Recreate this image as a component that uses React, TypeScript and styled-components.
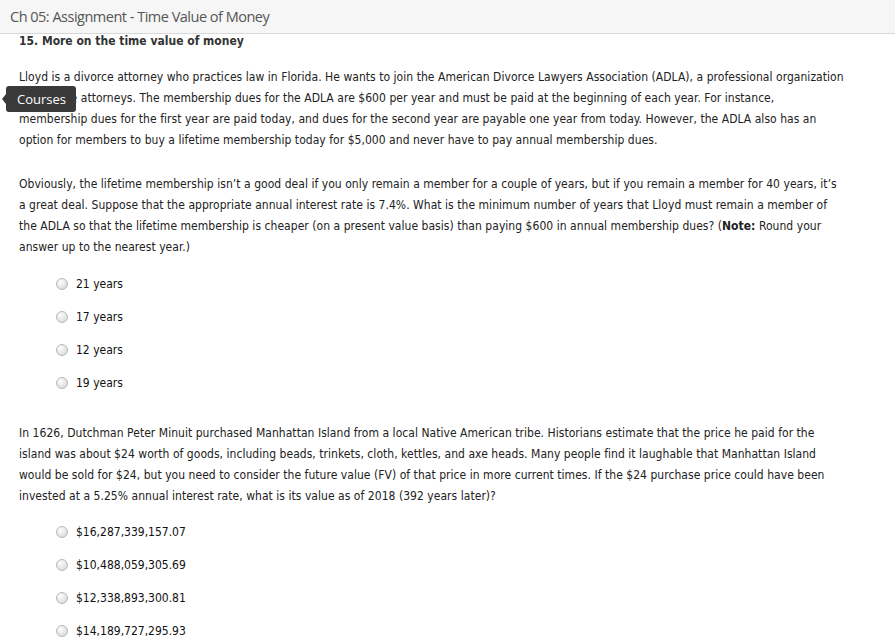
import React from 'react';
import styled, { createGlobalStyle } from 'styled-components';

const GlobalStyle = createGlobalStyle`
    body {
        margin: 0;
        background: #fff;
    }
`;

const Page = styled.div`
    position: relative;
    width: 895px;
    min-height: 639px;
    overflow: hidden;
`;

const Header = styled.header`
    height: 34px;
    display: flex;
    align-items: center;
    padding-left: 10px;
    background-color: #F6F6F6;
    border-bottom: 1px solid #D8D8D8;
    box-sizing: border-box;
`;

const Title = styled.h1`
    margin: 0;
    font-family: "Open Sans", sans-serif;
    font-weight: 400;
    font-size: 14.5px;
    color: #555;
    letter-spacing: -0.5px;
`;

const Content = styled.main`
    padding: 0 19px;
    font-family: "DejaVu Sans Condensed", "DejaVu Sans", sans-serif;
    font-size: 12px;
    color: #222;
`;

const Heading = styled.h2`
    margin: 0;
    font-size: 12px;
    line-height: 14px;
    font-weight: bold;
    color: #333;
`;

const Paragraph = styled.p<{ $gap?: number }>`
    margin: ${p => p.$gap ?? 23}px 0 0 0;
    line-height: 21px;
    letter-spacing: 0.04px;
    white-space: nowrap;
`;

const Options = styled.ul<{ $gap?: number }>`
    list-style: none;
    margin: ${p => p.$gap ?? 9}px 0 0 0;
    padding: 0 0 0 37px;
`;

const Option = styled.li`
    display: flex;
    align-items: center;
    height: 33px;
`;

const Radio = styled.input.attrs({ type: 'radio' })`
    appearance: none;
    width: 12px;
    height: 12px;
    margin: 0 8px 0 0;
    border-radius: 50%;
    border: 1px solid #B8B8B8;
    background: radial-gradient(circle at 35% 30%, #FDFDFD 0%, #E6E6E6 55%, #D2D2D2 100%);
    box-sizing: border-box;
`;

const OptionLabel = styled.label`
    color: #111;
`;

const Tooltip = styled.div`
    position: absolute;
    left: 6px;
    top: 86px;
    height: 26px;
    padding: 0 10px 0 11px;
    display: flex;
    align-items: center;
    background: #3A3A3A;
    border-radius: 3px;
    font-family: "Open Sans", sans-serif;
    font-size: 13px;
    color: #fff;

    &::before {
        content: '';
        position: absolute;
        left: -4px;
        top: 8px;
        border-style: solid;
        border-width: 5px 4px 5px 0;
        border-color: transparent #3A3A3A transparent transparent;
    }
`;

const Lines = ({ lines }: { lines: React.ReactNode[] }) => (
    <>
        {lines.map((line, i) => (
            <React.Fragment key={i}>
                {line}
                {i < lines.length - 1 && <br />}
            </React.Fragment>
        ))}
    </>
);

const intro = [
    'Lloyd is a divorce attorney who practices law in Florida. He wants to join the American Divorce Lawyers Association (ADLA), a professional organization',
    'for divorce attorneys. The membership dues for the ADLA are $600 per year and must be paid at the beginning of each year. For instance,',
    'membership dues for the first year are paid today, and dues for the second year are payable one year from today. However, the ADLA also has an',
    'option for members to buy a lifetime membership today for $5,000 and never have to pay annual membership dues.',
];

const lifetime = [
    'Obviously, the lifetime membership isn’t a good deal if you only remain a member for a couple of years, but if you remain a member for 40 years, it’s',
    'a great deal. Suppose that the appropriate annual interest rate is 7.4%. What is the minimum number of years that Lloyd must remain a member of',
    <>the ADLA so that the lifetime membership is cheaper (on a present value basis) than paying $600 in annual membership dues? (<b>Note:</b> Round your</>,
    'answer up to the nearest year.)',
];

const manhattan = [
    'In 1626, Dutchman Peter Minuit purchased Manhattan Island from a local Native American tribe. Historians estimate that the price he paid for the',
    'island was about $24 worth of goods, including beads, trinkets, cloth, kettles, and axe heads. Many people find it laughable that Manhattan Island',
    'would be sold for $24, but you need to consider the future value (FV) of that price in more current times. If the $24 purchase price could have been',
    'invested at a 5.25% annual interest rate, what is its value as of 2018 (392 years later)?',
];

const questionOne = ['21 years', '17 years', '12 years', '19 years'];
const questionTwo = ['$16,287,339,157.07', '$10,488,059,305.69', '$12,338,893,300.81', '$14,189,727,295.93'];

const App = () => {
    return (
        <Page>
            <GlobalStyle />
            <Header>
                <Title>Ch 05: Assignment - Time Value of Money</Title>
            </Header>
            <Content>
                <Heading>15. More on the time value of money</Heading>
                <Paragraph $gap={19}>
                    <Lines lines={intro} />
                </Paragraph>
                <Paragraph>
                    <Lines lines={lifetime} />
                </Paragraph>
                <Options>
                    {questionOne.map((o, i) => (
                        <Option key={o}>
                            <Radio name="q1" id={`q1-${i}`} />
                            <OptionLabel htmlFor={`q1-${i}`}>{o}</OptionLabel>
                        </Option>
                    ))}
                </Options>
                <Paragraph $gap={24}>
                    <Lines lines={manhattan} />
                </Paragraph>
                <Options $gap={8}>
                    {questionTwo.map((o, i) => (
                        <Option key={o}>
                            <Radio name="q2" id={`q2-${i}`} />
                            <OptionLabel htmlFor={`q2-${i}`}>{o}</OptionLabel>
                        </Option>
                    ))}
                </Options>
            </Content>
            <Tooltip>Courses</Tooltip>
        </Page>
    );
};

export default App;
